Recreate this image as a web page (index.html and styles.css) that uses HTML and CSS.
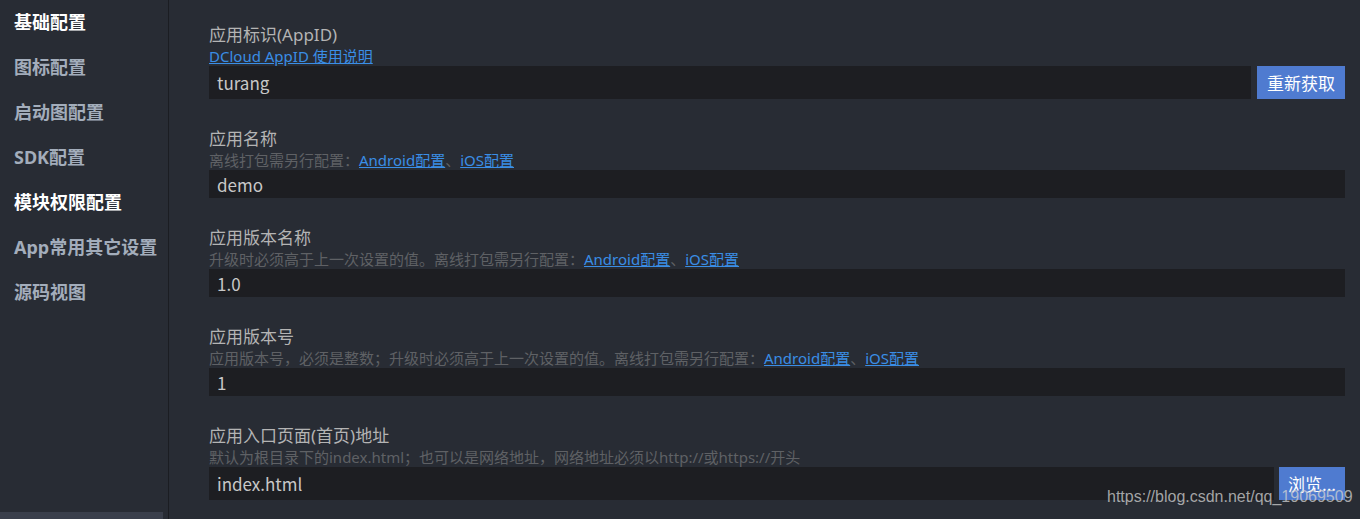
FILE: index.html
```html
<!DOCTYPE html>
<html lang="zh-CN">
<head>
<meta charset="utf-8">
<title>manifest</title>
<link rel="stylesheet" href="styles.css">
</head>
<body>
<div class="app">
  <aside class="sidebar">
    <ul class="nav">
      <li class="nav-item active">基础配置</li>
      <li class="nav-item">图标配置</li>
      <li class="nav-item">启动图配置</li>
      <li class="nav-item">SDK配置</li>
      <li class="nav-item active">模块权限配置</li>
      <li class="nav-item">App常用其它设置</li>
      <li class="nav-item">源码视图</li>
    </ul>
    <div class="hscroll"></div>
  </aside>
  <main class="content">
    <section class="field">
      <div class="label">应用标识(AppID)</div>
      <div class="desc"><a class="link" href="#">DCloud AppID 使用说明</a></div>
      <div class="row tall">
        <div class="input">turang</div>
        <button class="btn btn-wide">重新获取</button>
      </div>
    </section>
    <section class="field">
      <div class="label">应用名称</div>
      <div class="desc">离线打包需另行配置：<a class="link" href="#">Android配置</a>、<a class="link" href="#">iOS配置</a></div>
      <div class="row">
        <div class="input">demo</div>
      </div>
    </section>
    <section class="field">
      <div class="label">应用版本名称</div>
      <div class="desc">升级时必须高于上一次设置的值。离线打包需另行配置：<a class="link" href="#">Android配置</a>、<a class="link" href="#">iOS配置</a></div>
      <div class="row">
        <div class="input">1.0</div>
      </div>
    </section>
    <section class="field">
      <div class="label">应用版本号</div>
      <div class="desc">应用版本号，必须是整数；升级时必须高于上一次设置的值。离线打包需另行配置：<a class="link" href="#">Android配置</a>、<a class="link" href="#">iOS配置</a></div>
      <div class="row">
        <div class="input">1</div>
      </div>
    </section>
    <section class="field">
      <div class="label">应用入口页面(首页)地址</div>
      <div class="desc">默认为根目录下的index.html；也可以是网络地址，网络地址必须以http://或https://开头</div>
      <div class="row tall">
        <div class="input">index.html</div>
        <button class="btn btn-narrow">浏览...</button>
      </div>
    </section>
  </main>
  <div class="watermark">https://blog.csdn.net/qq_19069509</div>
</div>
</body>
</html>
```

FILE: styles.css
```css
html, body {
  margin: 0;
  padding: 0;
  height: 100%;
  overflow: hidden;
  background: #282c34;
}
body {
  font-family: "Noto Sans", "Noto Sans CJK SC", sans-serif;
  color: #bbbbbb;
}
.app {
  position: relative;
  display: flex;
  height: 519px;
}
.sidebar {
  width: 168px;
  flex: none;
  display: flex;
  flex-direction: column;
  background: #282c34;
  border-right: 1px solid #1b1d22;
}
.nav {
  list-style: none;
  margin: 0;
  padding: 0;
}
.nav-item {
  height: 45px;
  line-height: 45px;
  padding-left: 14px;
  font-size: 18px;
  font-weight: 700;
  color: #a3adbb;
  white-space: nowrap;
}
.nav-item.active {
  color: #ffffff;
}
.hscroll {
  margin-top: auto;
  width: 163px;
  height: 7px;
  background: #3a3f4b;
}
.content {
  flex: 1;
  padding: 24px 15px 0 40px;
}
.field {
  margin-bottom: 29px;
}
.label {
  height: 22px;
  line-height: 22px;
  font-size: 17px;
  color: #b4b4b4;
  white-space: nowrap;
}
.desc {
  height: 20px;
  line-height: 20px;
  font-size: 15px;
  color: #5f6165;
  white-space: nowrap;
}
.link {
  color: #3a8ee6;
  text-decoration: underline;
}
.row {
  display: flex;
  gap: 6px;
  height: 28px;
}
.row.tall {
  height: 33px;
}
.input {
  flex: 1;
  background: #1d1e22;
  color: #c8c8c8;
  font-family: "Noto Sans CJK SC", "Noto Sans", sans-serif;
  font-size: 17px;
  padding-left: 8px;
  display: flex;
  align-items: center;
}
.btn {
  flex: none;
  border: none;
  background: #4f7bd0;
  color: #ffffff;
  font-family: "Noto Sans CJK SC", sans-serif;
  font-size: 17px;
  padding: 0;
  height: 100%;
}
.btn-wide {
  width: 88px;
}
.btn-narrow {
  width: 66px;
  margin-left: -1px;
}
.watermark {
  position: absolute;
  left: 1107px;
  top: 488px;
  font-family: "Liberation Sans", Arial, sans-serif;
  font-size: 16px;
  color: rgba(210, 210, 210, 0.75);
  white-space: nowrap;
}
```
